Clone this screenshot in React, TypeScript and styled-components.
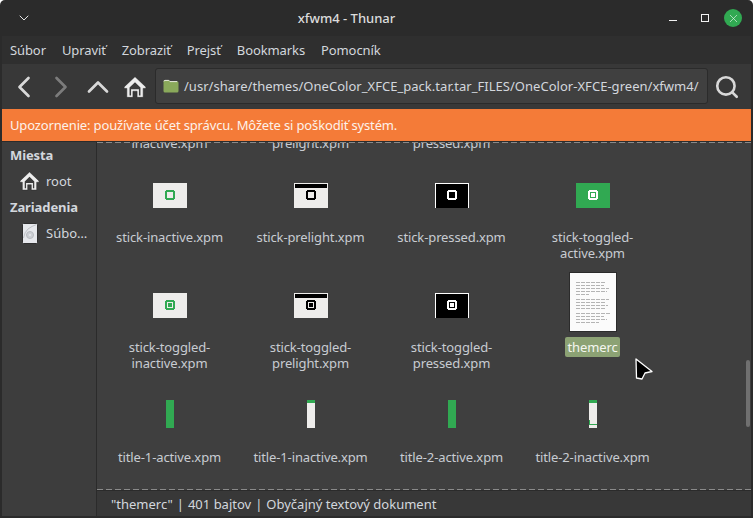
import styled, { createGlobalStyle } from "styled-components";
import { ChevronDown, ChevronLeft, ChevronRight, ChevronUp, Search, X } from "lucide-react";

const GlobalStyle = createGlobalStyle`
  html, body {
    margin: 0;
    background: #ffffff;
  }
`;

const GREEN = "#31a952";
const PAPER = "#eeedeb";

type StickKind = "inactive" | "prelight" | "pressed" | "active";

const StickIcon = ({ kind, toggled }: { kind: StickKind; toggled?: boolean }) => {
  const bg = kind === "active" ? GREEN : kind === "pressed" ? "#000" : PAPER;
  const ring = kind === "inactive" ? GREEN : kind === "prelight" ? "#000" : "#fff";
  const hole = kind === "inactive" || kind === "prelight" ? PAPER : kind === "active" ? GREEN : "#000";
  return (
    <svg width="34" height="25" viewBox="0 0 34 25" shapeRendering="crispEdges">
      <rect width="34" height="25" fill={bg} />
      {kind === "pressed" && <path d="M0 0h34v25h-1V1H1v24H0z" fill="#fff" />}
      {kind === "prelight" && <rect x="1" y="1" width="32" height="4" fill="#000" />}
      <rect x="13" y="7" width="8" height="10" fill={ring} />
      <rect x="12" y="8" width="10" height="8" fill={ring} />
      <rect x="14" y="9" width="6" height="6" fill={hole} />
      {toggled && <rect x="15" y="10" width="4" height="4" fill={ring} />}
    </svg>
  );
};

const TitleIcon = ({ inactive, second }: { inactive?: boolean; second?: boolean }) => (
  <svg width="8" height="28" viewBox="0 0 8 28" shapeRendering="crispEdges">
    <rect width="8" height="28" fill={inactive ? PAPER : GREEN} />
    {inactive && <rect width="8" height="3" fill={GREEN} />}
    {inactive && second && <path d="M0 20h1v4h7v1H0z" fill={GREEN} />}
  </svg>
);

const TextFileThumb = () => {
  const lines = [
    [10, 29], [13, 28], [16, 33], [19, 31], [22, 13],
    [27, 33], [30, 30], [33, 32], [36, 29],
    [41, 34], [44, 28], [47, 31], [50, 23],
  ];
  return (
    <svg width="48" height="60" viewBox="0 0 48 60" shapeRendering="crispEdges">
      <rect width="48" height="60" fill="#2b2b2b" />
      <rect x="1" y="1" width="46" height="58" fill="#fbfbfb" />
      {lines.map(([y, w]) => (
        <line key={y} x1="7" x2={7 + w} y1={y + 0.5} y2={y + 0.5} stroke="#b4b4b4" strokeDasharray="4 1" />
      ))}
    </svg>
  );
};

const HomeIcon = ({ size }: { size: number }) => (
  <svg width={size} height={size} viewBox="0 0 22 22">
    <path
      d="M11 1.500 .8 11.200l1 1.100H3.500v8.200h5.600v-5.600h3.800v5.600h5.600v-8.200h1.700l1-1.100z"
      fill="#ededed"
      stroke="#2a2a2a"
      strokeWidth=".5"
    />
    <path d="M6 11.500 11 6.600l5 4.900v7.200h-1.400V13H7.400v5.700H6z" fill="#3c3c3c" />
  </svg>
);

const DriveIcon = () => (
  <svg width="16" height="21" viewBox="0 0 16 21">
    <rect x=".5" y=".5" width="15" height="20" rx="1" fill="#e6e8ec" stroke="#2f2f2f" />
    <path d="M14.500 1.500Q10 3 6 6 2.500 9 1.500 15" stroke="#bfc2c7" fill="none" />
    <circle cx="8" cy="12" r="3.500" fill="#cdd0d5" stroke="#b8bbc0" />
    <circle cx="8" cy="12" r="1.100" fill="#e6e8ec" />
  </svg>
);

const FolderIcon = () => (
  <svg width="16" height="14" viewBox="0 0 16 14">
    <path d="M0.5 2.500Q.5 1 2 1h4l1.200 1.200H14q1.500 0 1.500 1.500V12q0 1.500-1.500 1.500H2Q.5 13.500.5 12z" fill="#8aa95b" />
    <path d="M1 2.400Q1 1.400 2 1.400h3.800L7 2.600h7.200" fill="none" stroke="#e6e8df" />
  </svg>
);

const Pointer = () => (
  <svg width="18" height="22" viewBox="0 0 18 22">
    <path d="M1 1 17 13.500 10 15l-3 6-5.500-1z" fill="#000" stroke="#fff" strokeWidth="1.300" strokeLinejoin="round" />
  </svg>
);

const Window = styled.div`
  position: relative;
  width: 753px;
  height: 518px;
  display: flex;
  flex-direction: column;
  box-sizing: border-box;
  overflow: hidden;
  background: #2b2b2b;
  border-radius: 5px 5px 0 0;
  font-family: "Noto Sans", sans-serif;
  font-size: 13px;
  color: #d3d7dd;
`;

const TitleBar = styled.header`
  height: 36px;
  flex: none;
  display: flex;
  align-items: center;
`;

const TitleMenuSlot = styled.div`
  width: 48px;
  display: flex;
  justify-content: center;
  color: #e4e4e4;
`;

const WindowTitle = styled.div`
  flex: 1;
  text-align: center;
  font-weight: 500;
  color: #dcdcdc;
`;

const WindowControls = styled.div`
  width: 108px;
  display: flex;
  align-items: center;
`;

const MinimizeMark = styled.span`
  width: 8px;
  height: 1px;
  margin: 4px 0 0 24px;
  background: #f2f2f2;
`;

const MaximizeMark = styled.span`
  width: 6px;
  height: 6px;
  margin-left: 24px;
  border: 1px solid #f2f2f2;
`;

const CloseButton = styled.span`
  width: 18px;
  height: 18px;
  margin-left: 15px;
  border-radius: 50%;
  background: ${GREEN};
  color: #e8f5ec;
  display: flex;
  align-items: center;
  justify-content: center;
`;

const Frame = styled.div`
  flex: 1;
  min-height: 0;
  margin: 0 2px 2px;
  display: flex;
  flex-direction: column;
`;

const MenuBar = styled.nav`
  height: 28px;
  flex: none;
  display: flex;
  align-items: center;
  gap: 16px;
  padding-left: 8px;
  background: #2f2f2f;
  letter-spacing: -0.1px;
`;

const Toolbar = styled.div`
  height: 45px;
  flex: none;
  display: flex;
  align-items: center;
  background: #383838;
  color: #d8d8d8;
`;

const ToolButton = styled.span`
  width: 37px;
  display: flex;
  justify-content: center;
  flex: none;
`;

const ToolsLead = styled.div`
  width: 153px;
  flex: none;
  display: flex;
  align-items: center;
  padding-left: 3px;
  box-sizing: border-box;
`;

const PathEntry = styled.div`
  flex: 1;
  height: 36px;
  margin-bottom: 1px;
  box-sizing: border-box;
  display: flex;
  align-items: center;
  gap: 5px;
  padding-left: 7px;
  border: 1px solid #2b2b2b;
  border-radius: 3px;
  background: #404040;
  color: #d3d7dd;
  white-space: nowrap;
  letter-spacing: 0.03px;
`;

const SearchSlot = styled.span`
  width: 43px;
  flex: none;
  box-sizing: border-box;
  padding-right: 5px;
  display: flex;
  justify-content: center;
`;

const InfoBar = styled.div`
  height: 32px;
  flex: none;
  display: flex;
  align-items: center;
  padding-left: 8px;
  background: #f47b38;
  color: #fdf2ea;
  letter-spacing: -0.15px;
`;

const Main = styled.div`
  flex: 1;
  min-height: 0;
  display: flex;
  border-top: 1px solid #2b2b2b;
`;

const Sidebar = styled.aside`
  width: 95px;
  flex: none;
  box-sizing: border-box;
  padding-top: 3px;
  border-right: 1px solid #2b2b2b;
  background: #3d3d3d;
`;

const SidebarHeading = styled.div`
  height: 20px;
  line-height: 20px;
  padding-left: 8px;
  font-weight: 700;
  letter-spacing: -0.1px;
`;

const SidebarRow = styled.div`
  height: 32px;
  display: flex;
  align-items: center;
  padding-left: 17px;
`;

const SidebarIcon = styled.span`
  width: 21px;
  margin-right: 6px;
  display: flex;
  align-items: center;
  justify-content: center;
`;

const Content = styled.div`
  flex: 1;
  min-width: 0;
  display: flex;
  flex-direction: column;
`;

const DashedRule = styled.div`
  height: 1px;
  flex: none;
  position: relative;
  z-index: 1;
  background-color: #3f3f3f;
  background-image: repeating-linear-gradient(90deg, #8a8a8a 0 6px, transparent 6px 9px);
`;

const IconView = styled.section`
  flex: 1;
  min-height: 0;
  overflow: hidden;
  background: #3f3f3f;
`;

const IconGrid = styled.div`
  display: grid;
  grid-template-columns: repeat(4, 141px);
  grid-template-rows: 27px repeat(3, 110px);
  padding-left: 2px;
  margin-top: -8px;
`;

const Tile = styled.div`
  display: flex;
  flex-direction: column;
  align-items: center;
`;

const IconSlot = styled.div<{ $thumb?: boolean }>`
  height: 60px;
  display: flex;
  align-items: flex-end;
  justify-content: center;
  padding-bottom: ${({ $thumb }) => ($thumb ? 0 : 14)}px;
  box-sizing: border-box;
`;

const TileLabel = styled.div<{ $selected?: boolean }>`
  margin-top: 5px;
  padding: 2px;
  border-radius: 2px;
  line-height: 16px;
  text-align: center;
  white-space: pre;
  letter-spacing: -0.12px;
  color: ${({ $selected }) => ($selected ? "#f4f6f0" : "#c8ccd2")};
  background: ${({ $selected }) => ($selected ? "#8ca274" : "transparent")};
`;

const ScrolledLabel = styled.div`
  line-height: 16px;
  letter-spacing: -0.12px;
  color: #c8ccd2;
`;

const StatusBar = styled.footer`
  height: 26px;
  flex: none;
  box-sizing: border-box;
  display: flex;
  align-items: center;
  gap: 4px;
  padding-left: 14px;
  border-top: 1px solid #2b2b2b;
  background: #383838;
`;

const ScrollThumb = styled.div`
  position: absolute;
  right: 3px;
  top: 360px;
  width: 4px;
  height: 67px;
  border-radius: 2px;
  background: #707070;
`;

const CursorOverlay = styled.div`
  position: absolute;
  left: 635px;
  top: 358px;
  line-height: 0;
`;

const scrolledLabels = ["inactive.xpm", "prelight.xpm", "pressed.xpm"];

const tiles = [
  { label: "stick-inactive.xpm", icon: <StickIcon kind="inactive" /> },
  { label: "stick-prelight.xpm", icon: <StickIcon kind="prelight" /> },
  { label: "stick-pressed.xpm", icon: <StickIcon kind="pressed" /> },
  { label: "stick-toggled-\nactive.xpm", icon: <StickIcon kind="active" toggled /> },
  { label: "stick-toggled-\ninactive.xpm", icon: <StickIcon kind="inactive" toggled /> },
  { label: "stick-toggled-\nprelight.xpm", icon: <StickIcon kind="prelight" toggled /> },
  { label: "stick-toggled-\npressed.xpm", icon: <StickIcon kind="pressed" toggled /> },
  { label: "themerc", icon: <TextFileThumb />, thumb: true, selected: true },
  { label: "title-1-active.xpm", icon: <TitleIcon /> },
  { label: "title-1-inactive.xpm", icon: <TitleIcon inactive /> },
  { label: "title-2-active.xpm", icon: <TitleIcon second /> },
  { label: "title-2-inactive.xpm", icon: <TitleIcon inactive second /> },
];

const App = () => {
  return (
    <Window>
      <GlobalStyle />
      <TitleBar>
        <TitleMenuSlot>
          <ChevronDown size={16} strokeWidth={1.5} />
        </TitleMenuSlot>
        <WindowTitle>xfwm4 - Thunar</WindowTitle>
        <WindowControls>
          <MinimizeMark />
          <MaximizeMark />
          <CloseButton>
            <X size={13} strokeWidth={1.2} />
          </CloseButton>
        </WindowControls>
      </TitleBar>
      <Frame>
        <MenuBar>
          <span>Súbor</span>
          <span>Upraviť</span>
          <span>Zobraziť</span>
          <span>Prejsť</span>
          <span>Bookmarks</span>
          <span>Pomocník</span>
        </MenuBar>
        <Toolbar>
          <ToolsLead>
            <ToolButton>
              <ChevronLeft size={36} strokeWidth={1.8} />
            </ToolButton>
            <ToolButton>
              <ChevronRight size={36} strokeWidth={1.8} color="#7c7c7c" />
            </ToolButton>
            <ToolButton>
              <ChevronUp size={36} strokeWidth={1.8} />
            </ToolButton>
            <ToolButton>
              <HomeIcon size={24} />
            </ToolButton>
          </ToolsLead>
          <PathEntry>
            <FolderIcon />
            /usr/share/themes/OneColor_XFCE_pack.tar.tar_FILES/OneColor-XFCE-green/xfwm4/
          </PathEntry>
          <SearchSlot>
            <Search size={26} strokeWidth={2.4} />
          </SearchSlot>
        </Toolbar>
        <InfoBar>Upozornenie: používate účet správcu. Môžete si poškodiť systém.</InfoBar>
        <Main>
          <Sidebar>
            <SidebarHeading>Miesta</SidebarHeading>
            <SidebarRow>
              <SidebarIcon>
                <HomeIcon size={22} />
              </SidebarIcon>
              root
            </SidebarRow>
            <SidebarHeading>Zariadenia</SidebarHeading>
            <SidebarRow>
              <SidebarIcon>
                <DriveIcon />
              </SidebarIcon>
              Súbo…
            </SidebarRow>
          </Sidebar>
          <Content>
            <DashedRule />
            <IconView>
              <IconGrid>
                {scrolledLabels.map((label) => (
                  <Tile key={label}>
                    <ScrolledLabel>{label}</ScrolledLabel>
                  </Tile>
                ))}
                <Tile />
                {tiles.map((tile) => (
                  <Tile key={tile.label}>
                    <IconSlot $thumb={tile.thumb}>{tile.icon}</IconSlot>
                    <TileLabel $selected={tile.selected}>{tile.label}</TileLabel>
                  </Tile>
                ))}
              </IconGrid>
            </IconView>
            <DashedRule />
            <StatusBar>
              <span>"themerc"</span>
              <span>|</span>
              <span>401 bajtov</span>
              <span>|</span>
              <span>Obyčajný textový dokument</span>
            </StatusBar>
          </Content>
        </Main>
      </Frame>
      <ScrollThumb />
      <CursorOverlay>
        <Pointer />
      </CursorOverlay>
    </Window>
  );
};

export default App;
